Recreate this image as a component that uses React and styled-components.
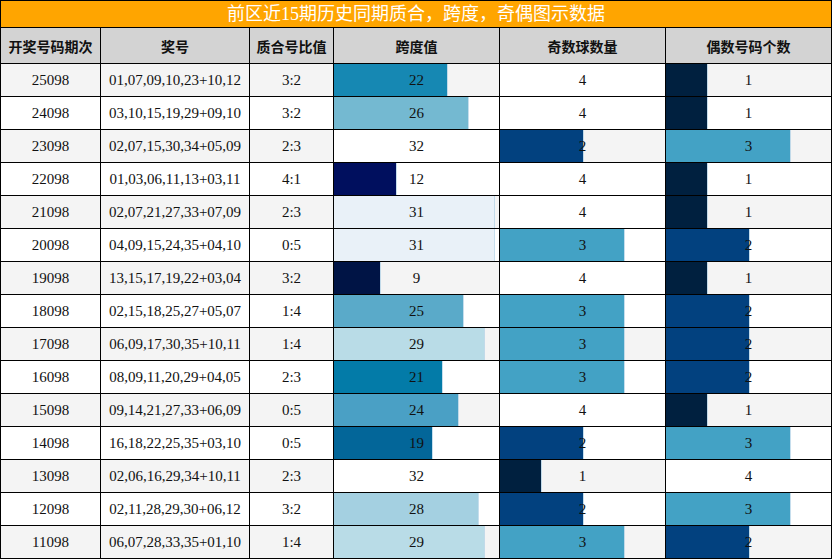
import styled, { createGlobalStyle } from "styled-components";

const GlobalStyle = createGlobalStyle`
  html, body {
    margin: 0;
    padding: 0;
    background: #fff;
  }
`;

const rows = [
  ["25098", "01,07,09,10,23+10,12", "3:2", 22, 4, 1],
  ["24098", "03,10,15,19,29+09,10", "3:2", 26, 4, 1],
  ["23098", "02,07,15,30,34+05,09", "2:3", 32, 2, 3],
  ["22098", "01,03,06,11,13+03,11", "4:1", 12, 4, 1],
  ["21098", "02,07,21,27,33+07,09", "2:3", 31, 4, 1],
  ["20098", "04,09,15,24,35+04,10", "0:5", 31, 3, 2],
  ["19098", "13,15,17,19,22+03,04", "3:2", 9, 4, 1],
  ["18098", "02,15,18,25,27+05,07", "1:4", 25, 3, 2],
  ["17098", "06,09,17,30,35+10,11", "1:4", 29, 3, 2],
  ["16098", "08,09,11,20,29+04,05", "2:3", 21, 3, 2],
  ["15098", "09,14,21,27,33+06,09", "0:5", 24, 4, 1],
  ["14098", "16,18,22,25,35+03,10", "0:5", 19, 2, 3],
  ["13098", "02,06,16,29,34+10,11", "2:3", 32, 1, 4],
  ["12098", "02,11,28,29,30+06,12", "3:2", 28, 2, 3],
  ["11098", "06,07,28,33,35+01,10", "1:4", 29, 3, 2],
];

// span colour scale, sampled
const spanColors = {
  9: "#001445",
  12: "#000f5e",
  19: "#036699",
  21: "#037ba8",
  22: "#1688b3",
  24: "#4aa0c5",
  25: "#5aaac9",
  26: "#74b9d1",
  28: "#a4d0e1",
  29: "#b9dce7",
  31: "#e9f1f8",
  32: "#ffffff",
};

const countColors = {
  1: "#00203f",
  2: "#02417f",
  3: "#43a2c5",
  4: "#ffffff",
};

const headers = ["开奖号码期次", "奖号", "质合号比值", "跨度值", "奇数球数量", "偶数号码个数"];

const Frame = styled.div`
  width: 832px;
  display: grid;
  grid-template-columns: 99px 148px 83px 165px 165px 165px;
  gap: 1px;
  padding: 1px;
  box-sizing: border-box;
  background: #000;
`;

const Title = styled.div`
  grid-column: 1 / -1;
  height: 26px;
  background: #ffa500;
  color: #fff;
  font-family: "Liberation Serif", "Noto Sans CJK SC", serif;
  font-size: 18px;
  line-height: 26px;
  text-align: center;
`;

const Head = styled.div`
  height: 35px;
  background: #d3d3d3;
  display: flex;
  align-items: center;
  justify-content: center;
  font-family: "Noto Sans CJK SC", sans-serif;
  font-weight: bold;
  font-size: 14px;
  color: #111;
`;

const Cell = styled.div`
  position: relative;
  height: 32px;
  background: ${(p) => (p.$odd ? "#f4f4f4" : "#ffffff")};
  display: flex;
  align-items: center;
  justify-content: center;
  font-family: "Liberation Serif", serif;
  font-size: 15px;
  color: #111;
  overflow: hidden;
`;

const Bar = styled.div`
  position: absolute;
  left: 0;
  top: 0;
  bottom: 0;
  background: ${(p) => p.$color};
  box-shadow: 1px 0 0 rgba(160, 200, 225, 0.6);
`;

const Label = styled.span`
  position: relative;
`;

const BarCell = ({ value, max, color, odd }) => (
  <Cell $odd={odd}>
    <Bar $color={color} style={{ width: `${(value / max) * 100}%` }} />
    <Label>{value}</Label>
  </Cell>
);

export default function App() {
  return (
    <>
      <GlobalStyle />
      <Frame>
        <Title>前区近15期历史同期质合，跨度，奇偶图示数据</Title>
        {headers.map((h) => (
          <Head key={h}>{h}</Head>
        ))}
        {rows.map(([issue, nums, ratio, span, odd, even], i) => {
          const alt = i % 2 === 0;
          return [
            <Cell key={issue + "a"} $odd={alt}>{issue}</Cell>,
            <Cell key={issue + "b"} $odd={alt}>{nums}</Cell>,
            <Cell key={issue + "c"} $odd={alt}>{ratio}</Cell>,
            <BarCell key={issue + "d"} value={span} max={32} color={spanColors[span]} odd={alt} />,
            <BarCell key={issue + "e"} value={odd} max={4} color={countColors[odd]} odd={alt} />,
            <BarCell key={issue + "f"} value={even} max={4} color={countColors[even]} odd={alt} />,
          ];
        })}
      </Frame>
    </>
  );
}
